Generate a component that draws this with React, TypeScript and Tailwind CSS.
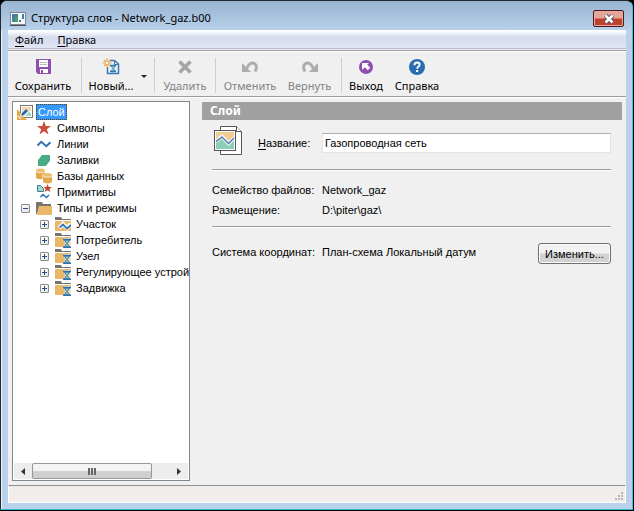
import React, { useState } from 'react';
import clsx from 'clsx';

const UI_FONT = "font-['Noto_Sans','Open_Sans',sans-serif]";
const FORM_FONT = "font-['Liberation_Sans','Noto_Sans',sans-serif]";

function AppIcon() {
    return (
        <svg width="16" height="14" viewBox="0 0 16 14" aria-hidden="true">
            <rect x="0.5" y="0.5" width="15" height="12" fill="#f6f8f8" stroke="#7e8890" />
            <path d="M0 13.5h16" stroke="#4a5058" />
            <rect x="2" y="2" width="6" height="8" fill="#3f8a8a" />
            <rect x="2" y="2" width="3" height="5" fill="#4f78b0" />
            <rect x="5" y="5" width="3" height="5" fill="#4a9f6a" />
            <rect x="9" y="8" width="2" height="2" fill="#507aa0" />
            <rect x="12" y="2" width="2" height="5" fill="#3b7fa8" />
        </svg>
    );
}

function SaveIcon() {
    return (
        <svg width="16" height="16" viewBox="0 0 16 16" aria-hidden="true">
            <path d="M1 0h15v15H3l-2-2z" fill="#8e4fae" />
            <path d="M4 1h9v7H4z" fill="#fff" />
            <path d="M5 3.5h7M5 5.500h7" stroke="#b9b9b9" />
            <path d="M5 10h8v4H5z" fill="#fff" />
            <path d="M6 11h2v3H6z" fill="#8e4fae" />
        </svg>
    );
}

function NewIcon() {
    return (
        <svg width="18" height="17" viewBox="0 0 18 17" aria-hidden="true">
            <path d="M8 2.500h4.500l4 3.500v9.500H5.500V9" fill="#eef3f8" stroke="#3a78b4" strokeWidth="1.500" />
            <path d="M12.500 2.500v4h4" fill="none" stroke="#3a78b4" />
            <path d="M8 7.500h6M8 13.500h6" stroke="#2f72b4" strokeWidth="1.500" />
            <path d="M9 8l2 2.500L9 13h4.500l-2-2.500 2-2.500z" fill="#8ed0bd" stroke="#3a78b4" strokeWidth="0.800" />
            <path d="M5 0.500v9M0.500 5h9M1.800 1.800l6.400 6.400M8.200 1.800L1.800 8.200" stroke="#e9a33e" strokeWidth="1.200" />
            <circle cx="5" cy="5" r="1.200" fill="#fff" />
        </svg>
    );
}

function DeleteIcon() {
    return (
        <svg width="16" height="16" viewBox="0 0 16 16" aria-hidden="true">
            <path d="M2.500 2.500l11 11M13.500 2.500l-11 11" stroke="#a5a5a5" strokeWidth="3.600" />
        </svg>
    );
}

function UndoIcon({ flipped = false }: { flipped?: boolean }) {
    return (
        <svg width="16" height="16" viewBox="0 0 16 16" className={flipped ? '-scale-x-100' : ''} aria-hidden="true">
            <path d="M4.500 9.500C7 4.500 10 3 12.500 4.500s2.500 5 .5 8" fill="none" stroke="#adadad" strokeWidth="3" />
            <path d="M0 4v9h9z" fill="#adadad" />
        </svg>
    );
}

function ExitIcon() {
    return (
        <svg width="16" height="16" viewBox="0 0 16 16" aria-hidden="true">
            <circle cx="8" cy="8" r="7" fill="#8e4fae" />
            <path d="M4 4h7L9.200 5.800l3 3-2.400 2.400-3-3L4 11z" fill="#fff" />
        </svg>
    );
}

function HelpIcon() {
    return (
        <svg width="16" height="16" viewBox="0 0 16 16" aria-hidden="true">
            <circle cx="8" cy="8" r="8" fill="#2a6db3" />
            <path d="M5.500 6.200C5.500 4.200 6.600 3.600 8 3.600s2.600.8 2.600 2.200c0 1.800-2.400 1.800-2.400 4" fill="none" stroke="#fff" strokeWidth="2" />
            <rect x="7" y="11" width="2.200" height="2" fill="#fff" />
        </svg>
    );
}

function LayerIcon() {
    return (
        <svg width="16" height="16" viewBox="0 0 16 16" aria-hidden="true">
            <rect x="3.500" y="1.500" width="12" height="12" fill="#fff" stroke="#777" />
            <path d="M5 3h9v3l-2 2-3-3-4 4z" fill="#f3d7a6" />
            <path d="M8 12l3-4 3 1v3z" fill="#a5d8c4" />
            <path d="M0 5v11h10z" fill="#e8a94a" />
            <path d="M3 13l1-4 4-4 3 3-4 4z" fill="#fff" />
            <path d="M4 12l1-3 4-4 2 2-4 4z" fill="#2565a8" />
            <path d="M1 12l3 3" stroke="#fff" />
        </svg>
    );
}

function StarIcon() {
    return (
        <svg width="16" height="16" viewBox="0 0 16 16" aria-hidden="true">
            <path d="M8 1l1.800 5H15l-4.200 3.200L12.500 14.500 8 11.300l-4.500 3.200 1.700-5.300L1 6h5.200z" fill="#c94f38" />
        </svg>
    );
}

function WaveIcon() {
    return (
        <svg width="16" height="16" viewBox="0 0 16 16" aria-hidden="true">
            <path d="M1.500 9.500L5.300 5.800l5 4.400 4.200-4" fill="none" stroke="#2f72b0" strokeWidth="2" />
        </svg>
    );
}

function FillIcon() {
    return (
        <svg width="16" height="16" viewBox="0 0 16 16" aria-hidden="true">
            <path d="M6 3h8v5.500L10 14H2V8z" fill="#46ad85" />
        </svg>
    );
}

function DatabaseIcon() {
    return (
        <svg width="16" height="16" viewBox="0 0 16 16" aria-hidden="true">
            <path d="M0 2.500v7c0 2.300 9 2.300 9 0v-7z" fill="#e3a84c" />
            <ellipse cx="4.500" cy="2.500" rx="4.500" ry="2" fill="#edbd70" />
            <path d="M0 3c0 2.200 9 2.200 9 0" fill="none" stroke="#fff" strokeWidth="0.800" />
            <path d="M6.500 6.500v9H16v-9z" fill="#fff" />
            <path d="M7 7v6.500c0 2.500 9 2.500 9 0V7z" fill="#e3a84c" />
            <ellipse cx="11.500" cy="7" rx="4.500" ry="2" fill="#edbd70" />
            <path d="M7 7.500c0 2.200 9 2.200 9 0" fill="none" stroke="#fff" strokeWidth="0.800" />
        </svg>
    );
}

function PrimitivesIcon() {
    return (
        <svg width="16" height="16" viewBox="0 0 16 16" aria-hidden="true">
            <path d="M1.500 1.500h3l3 3v3h-6z" fill="#a4d8c4" stroke="#3c7d96" />
            <path d="M11.500 0l1.200 3H16l-2.600 2 1 3-2.900-1.800L8.600 8l1-3L7.500 3h2.900z" fill="#c8432f" />
            <path d="M4.500 13l2.500-2.500 3.500 3L13 11" fill="none" stroke="#2f72b0" strokeWidth="1.600" />
        </svg>
    );
}

function FolderIcon() {
    return (
        <svg width="16" height="16" viewBox="0 0 16 16" aria-hidden="true">
            <path d="M0 2h6l1 2h8v3H3L1 14H0z" fill="#777370" />
            <path d="M3 6h13v9H1z" fill="#eab768" />
        </svg>
    );
}

function TypeIcon({ wave = false }: { wave?: boolean }) {
    return (
        <svg width="16" height="16" viewBox="0 0 16 16" aria-hidden="true">
            <path d="M0 3V1h6l1 2z" fill="#777370" />
            <path d="M0 3.500h16" stroke="#777370" />
            <path d="M0 5h16v10H0z" fill="#eab768" />
            {wave ? (
                <>
                    <path d="M4 12l4-4 4 4 4-4" fill="none" stroke="#fff" strokeWidth="4" />
                    <path d="M4.500 11.500L8 8.500l4 4 4-3.500" fill="none" stroke="#3476b2" strokeWidth="1.800" />
                </>
            ) : (
                <>
                    <path d="M8 6h8v10H8l2-4z" fill="#f4e2c2" />
                    <path d="M9.500 8l2 3.500-2 3.500h5l-2-3.500 2-3.500z" fill="#92d2be" stroke="#3476b2" />
                    <path d="M8 7.500h8M8 15.200h8" stroke="#2d6fae" strokeWidth="1.500" />
                </>
            )}
        </svg>
    );
}

function DocumentsIcon() {
    return (
        <svg width="30" height="31" viewBox="0 0 30 31" aria-hidden="true">
            <path d="M8.500 1.500h16l5 5v23h-21z" fill="#fff" stroke="#555" />
            <path d="M24.500 1.500v5h5" fill="#fff" stroke="#555" />
            <rect x="2.500" y="5.500" width="21" height="20" fill="#fff" stroke="#555" />
            <path d="M4 7h18v9l-4 4-7-6-7 5z" fill="#f0cc91" />
            <path d="M4 18l6-4 6 6 6-5v9H4z" fill="#8fceb6" />
            <path d="M4 16.500l6-5 6.500 7 5.500-5.500" fill="none" stroke="#fff" strokeWidth="3.500" />
            <path d="M4 16.500l6-4.500 6.500 6.500 5.500-5.500" fill="none" stroke="#5887b8" strokeWidth="1.600" />
        </svg>
    );
}

interface ToolButtonProps {
    label: string;
    width: string;
    icon: React.ReactNode;
    disabled?: boolean;
}

function ToolButton({ label, width, icon, disabled }: ToolButtonProps) {
    return (
        <button
            disabled={disabled}
            className={clsx('flex h-full flex-col items-center gap-[3px] pt-[6px] text-[11px] leading-4 whitespace-nowrap', width, disabled ? 'text-[#838383]' : 'text-black')}
        >
            <span className="flex h-[17px] items-center">{icon}</span>
            {label}
        </button>
    );
}

function Separator() {
    return <span className="mx-[3px] mt-[6px] h-[35px] w-px shrink-0 bg-[#cdcdd6]" />;
}

function Rule({ className }: { className?: string }) {
    return <hr className={clsx('h-[2px] border-0 border-t border-t-[#9c9c9c] bg-white', className)} />;
}

const BRANCHES = [
    { label: 'Символы', icon: <StarIcon /> },
    { label: 'Линии', icon: <WaveIcon /> },
    { label: 'Заливки', icon: <FillIcon /> },
    { label: 'Базы данных', icon: <DatabaseIcon /> },
    { label: 'Примитивы', icon: <PrimitivesIcon /> },
];

const TYPES = ['Участок', 'Потребитель', 'Узел', 'Регулирующее устрой', 'Задвижка'];

function Expander({ open = false }: { open?: boolean }) {
    return (
        <button aria-label={open ? 'Свернуть' : 'Развернуть'} className="flex size-[9px] shrink-0 rounded-[1px] border border-[#8c8c8c] bg-gradient-to-br from-white to-[#e2e2e2]">
            <svg width="7" height="7" viewBox="0 0 7 7" aria-hidden="true">
                <path d={open ? 'M1 3.5h5' : 'M1 3.5h5M3.500 1v5'} stroke="#31498e" />
            </svg>
        </button>
    );
}

function Tree() {
    return (
        <div className="flex w-[178px] shrink-0 flex-col border border-[#828790] bg-white">
            <ul className="flex-1 overflow-hidden pt-[2px] text-[11px] leading-4 whitespace-nowrap">
                <li className="flex h-4 items-center gap-[3px] pl-1">
                    <LayerIcon />
                    <span className="bg-[#3399ff] px-[2px] text-white outline-1 -outline-offset-1 outline-dotted outline-[#6b3a00]">Слой</span>
                </li>
                {BRANCHES.map((item) => (
                    <li key={item.label} className="flex h-4 items-center gap-[5px] pl-[23px]">
                        {item.icon}
                        {item.label}
                    </li>
                ))}
                <li className="flex h-4 items-center pl-2">
                    <Expander open />
                    <span className="flex items-center gap-[5px] pl-[6px]">
                        <FolderIcon />
                        Типы и режимы
                    </span>
                </li>
                {TYPES.map((label, index) => (
                    <li key={label} className="flex h-4 items-center pl-[27px]">
                        <Expander />
                        <span className="flex items-center gap-[5px] pl-[6px]">
                            <TypeIcon wave={index === 0} />
                            {label}
                        </span>
                    </li>
                ))}
            </ul>
            <div className="m-px flex h-4 bg-[#ededed]">
                <button aria-label="Влево" className="flex w-[18px] items-center justify-center">
                    <svg width="4" height="7" viewBox="0 0 4 7" aria-hidden="true"><path d="M4 0v7L0 3.500z" fill="#333" /></svg>
                </button>
                <div className="flex w-[120px] items-center justify-center gap-px rounded-[2px] border border-[#979797] bg-gradient-to-b from-[#f4f4f4] from-45% to-[#cfcfcf] to-55%">
                    <span className="h-[7px] w-[2px] bg-[#666]" />
                    <span className="h-[7px] w-[2px] bg-[#666]" />
                    <span className="h-[7px] w-[2px] bg-[#666]" />
                </div>
                <span className="flex-1" />
                <button aria-label="Вправо" className="flex w-[18px] items-center justify-center">
                    <svg width="4" height="7" viewBox="0 0 4 7" aria-hidden="true"><path d="M0 0v7l4-3.500z" fill="#333" /></svg>
                </button>
            </div>
        </div>
    );
}

function LayerForm() {
    const [name, setName] = useState('Газопроводная сеть');

    return (
        <main className="min-w-0 flex-1 pt-px pr-1 pl-3">
            <h1 className={clsx('h-[18px] bg-[#a0a0a0] pl-2 text-[12px] leading-[18px] font-bold text-white', UI_FONT)}>Слой</h1>
            <div className="pr-[11px] pl-[10px] text-[11px] leading-5">
                <div className="flex h-[49px] items-start pt-[5px]">
                    <DocumentsIcon />
                    <label htmlFor="layer-name" className="w-20 shrink-0 pt-2 pl-4 whitespace-nowrap">
                        <u className="underline-offset-2">Н</u>азвание:
                    </label>
                    <input
                        id="layer-name"
                        value={name}
                        onChange={(e) => setName(e.target.value)}
                        className="mt-2 h-5 min-w-0 flex-1 border border-[#e2e3ea] border-t-[#abadb3] bg-white px-[2px] leading-4 outline-none"
                    />
                </div>
                <Rule />
                <dl className="grid grid-cols-[110px_1fr] pt-[9px] whitespace-nowrap">
                    <dt>Семейство файлов:</dt>
                    <dd>Network_gaz</dd>
                    <dt>Размещение:</dt>
                    <dd>D:\piter\gaz\</dd>
                </dl>
                <Rule className="mt-[6px]" />
                <div className="flex items-start pt-[14px] whitespace-nowrap">
                    <span className="w-[110px] shrink-0">Система координат:</span>
                    <span className="flex-1">План-схема Локальный датум</span>
                    <button className="mt-px h-[21px] w-[73px] rounded-[3px] border border-[#707070] bg-gradient-to-b from-[#f2f2f2] from-45% to-[#d2d2d2] to-55% leading-[18px] shadow-[inset_0_0_0_1px_#fafafa]">
                        Изменить...
                    </button>
                </div>
            </div>
        </main>
    );
}

export default function App() {
    return (
        <div className="flex h-screen flex-col bg-black pr-px pb-px">
            <div className={clsx('flex flex-1 flex-col rounded-t-[7px] border-t border-r border-b border-l border-t-[#202830] border-r-[#35c5e8] border-b-[#35b5c8] border-l-[#202830] bg-[#b9d1ea] pr-[6px] pb-[6px] pl-[7px] text-black shadow-[inset_1px_0_0_#e8f2fa]', UI_FONT)}>
                <header className="-mr-[6px] -ml-[7px] flex h-[29px] items-center rounded-t-[6px] bg-gradient-to-b from-[#98b4d2] to-[#b8d0e9] pt-[6px] pr-2 pl-[9px] text-[11px]">
                    <AppIcon />
                    <span className="flex-1 pl-[5px]">Структура слоя - Network_gaz.b00</span>
                    <button
                        aria-label="Закрыть"
                        className="flex h-[17px] w-[31px] items-center justify-center rounded-[2px] border border-[#4c1820] bg-gradient-to-b from-[#e6a59b] from-45% to-[#bd402c] to-55% shadow-[inset_0_0_0_1px_#e8a8a0]"
                    >
                        <svg width="12" height="10" viewBox="0 0 12 10" aria-hidden="true">
                            <path d="M2.500 1.500l7 7M9.500 1.500l-7 7" stroke="#4d4f5e" strokeWidth="4.500" />
                            <path d="M2.500 1.500l7 7M9.500 1.500l-7 7" stroke="#fff" strokeWidth="2.500" />
                        </svg>
                    </button>
                </header>
                <div className="flex min-h-0 flex-1 flex-col bg-[#f0f0f0]">
                    <nav className="flex h-[19px] shrink-0 gap-[14px] border-b border-b-[#b6bccc] bg-gradient-to-b from-white from-5% via-[#d5dbed] via-40% to-[#e1e6f5] pl-[7px] text-[11px] leading-[19px]">
                        <button><u className="underline-offset-2">Ф</u>айл</button>
                        <button><u className="underline-offset-2">П</u>равка</button>
                    </nav>
                    <Rule className="mt-px shrink-0" />
                    <div className="flex h-[44px] shrink-0">
                        <ToolButton label="Сохранить" width="w-[70px]" icon={<SaveIcon />} />
                        <Separator />
                        <ToolButton label="Новый..." width="w-[52px]" icon={<NewIcon />} />
                        <button aria-label="Создать" className="flex w-[14px] items-center justify-center pt-1">
                            <svg width="6" height="3" viewBox="0 0 6 3" aria-hidden="true"><path d="M0 0h6L3 3z" fill="#222" /></svg>
                        </button>
                        <Separator />
                        <ToolButton label="Удалить" width="w-[54px]" icon={<DeleteIcon />} disabled />
                        <Separator />
                        <ToolButton label="Отменить" width="w-[62px]" icon={<UndoIcon />} disabled />
                        <ToolButton label="Вернуть" width="w-[57px]" icon={<UndoIcon flipped />} disabled />
                        <Separator />
                        <ToolButton label="Выход" width="w-[42px]" icon={<ExitIcon />} />
                        <ToolButton label="Справка" width="w-[60px]" icon={<HelpIcon />} />
                    </div>
                    <Rule className="shrink-0" />
                    <div className={clsx('flex min-h-0 flex-1 pt-[3px] pb-1 pl-1', FORM_FONT)}>
                        <Tree />
                        <LayerForm />
                    </div>
                    <footer className="flex h-[18px] shrink-0 items-end justify-end border border-t-[#8f8f8f] border-r-white border-b-white border-l-white bg-[#f1edec] p-px">
                        <svg width="10" height="10" viewBox="0 0 10 10" aria-hidden="true">
                            <path d="M7 1h2v2H7zM4 4h2v2H4zM7 4h2v2H7zM1 7h2v2H1zM4 7h2v2H4zM7 7h2v2H7z" fill="#b8b4b2" />
                        </svg>
                    </footer>
                </div>
            </div>
        </div>
    );
}
